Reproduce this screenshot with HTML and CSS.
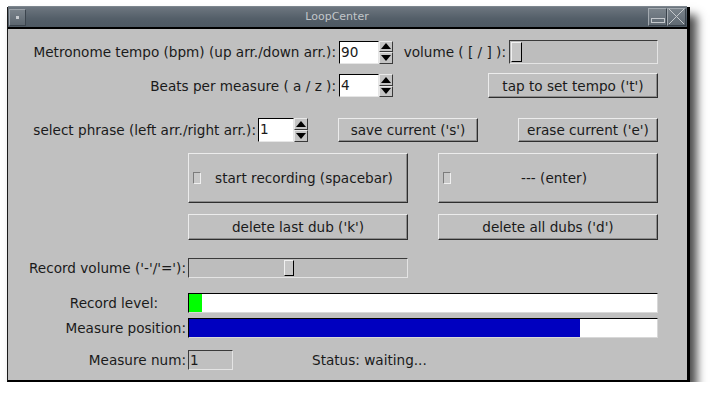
FILE: index.html
```html
<!DOCTYPE html>
<html>
<head>
<meta charset="utf-8">
<title>LoopCenter</title>
<link rel="stylesheet" href="styles.css">
</head>
<body>
<div class="window">
  <div class="titlebar">
    <div class="tb-menu"><span class="tb-dot"></span></div>
    <div class="tb-title">LoopCenter</div>
    <div class="tb-btn"><span class="min-bar"></span></div>
    <div class="tb-btn">
      <svg width="17" height="17" viewBox="0 0 17 17"><path d="M1 1 L16 16 M16 1 L1 16" stroke="#c4c8cc" stroke-width="1" fill="none"/></svg>
    </div>
  </div>
  <div class="content">
    <div class="row r1">
      <span class="lbl w-top">Metronome tempo (bpm) (up arr./down arr.):</span>
      <div class="spin">
        <div class="entry e-top">90</div>
        <div class="arrows">
          <span class="arr"><svg width="10" height="6" viewBox="0 0 10 6"><path d="M5 0 L10 6 L0 6 Z" fill="#000"/></svg></span>
          <span class="arr"><svg width="10" height="6" viewBox="0 0 10 6"><path d="M0 0 L10 0 L5 6 Z" fill="#000"/></svg></span>
        </div>
      </div>
      <div class="vol-group">
        <span class="lbl">volume ( [ / ] ):</span>
        <div class="trough vol-trough"><span class="handle h-vol"></span></div>
      </div>
    </div>

    <div class="row r2">
      <span class="lbl w-top">Beats per measure ( a / z ):</span>
      <div class="spin">
        <div class="entry e-top">4</div>
        <div class="arrows">
          <span class="arr"><svg width="10" height="6" viewBox="0 0 10 6"><path d="M5 0 L10 6 L0 6 Z" fill="#000"/></svg></span>
          <span class="arr"><svg width="10" height="6" viewBox="0 0 10 6"><path d="M0 0 L10 0 L5 6 Z" fill="#000"/></svg></span>
        </div>
      </div>
      <button class="btn b-tap">tap to set tempo ('t')</button>
    </div>

    <div class="row r3">
      <span class="lbl w-phrase">select phrase (left arr./right arr.):</span>
      <div class="spin">
        <div class="entry e-phrase">1</div>
        <div class="arrows">
          <span class="arr"><svg width="10" height="6" viewBox="0 0 10 6"><path d="M5 0 L10 6 L0 6 Z" fill="#000"/></svg></span>
          <span class="arr"><svg width="10" height="6" viewBox="0 0 10 6"><path d="M0 0 L10 0 L5 6 Z" fill="#000"/></svg></span>
        </div>
      </div>
      <button class="btn b-save">save current ('s')</button>
      <button class="btn b-erase">erase current ('e')</button>
    </div>

    <div class="grid2 r4">
      <button class="btn big"><span class="ind"></span><span class="big-txt">start recording (spacebar)</span></button>
      <button class="btn big"><span class="ind"></span><span class="big-txt">--- (enter)</span></button>
    </div>

    <div class="grid2 r5">
      <button class="btn">delete last dub ('k')</button>
      <button class="btn">delete all dubs ('d')</button>
    </div>

    <div class="row r6">
      <span class="lbl w-low">Record volume ('-'/'='):</span>
      <div class="trough rec-trough"><span class="handle h-rec"></span></div>
    </div>

    <div class="row r7">
      <span class="lbl w-low lvl">Record level:</span>
      <div class="bar"><span class="fill fill-green" style="width:13px"></span></div>
    </div>

    <div class="row r8">
      <span class="lbl w-low">Measure position:</span>
      <div class="bar"><span class="fill fill-blue" style="width:391px"></span></div>
    </div>

    <div class="row r9">
      <span class="lbl w-low">Measure num:</span>
      <div class="entry e-num">1</div>
      <span class="lbl status">Status: waiting...</span>
    </div>
  </div>
</div>
</body>
</html>
```

FILE: styles.css
```css
html, body {
  margin: 0;
  padding: 0;
  background: #ffffff;
}

body {
  padding: 7px 0 0 7px;
  font-family: "DejaVu Sans", sans-serif;
  font-size: 13.6px;
  color: #1a1a1a;
}

.window {
  width: 683px;
  height: 375px;
  box-sizing: border-box;
  border-left: 1px solid #1a1a1a;
  border-right: 3px solid #000;
  border-bottom: 2px solid #000;
  background: #c0c0c0;
  box-shadow: 7px 8px 9px rgba(0, 0, 0, 0.7);
  display: flex;
  flex-direction: column;
}

.titlebar {
  height: 20px;
  flex: none;
  display: flex;
  align-items: center;
  background: linear-gradient(#6d767f, #535e68 60%, #4e5963);
  border-top: 1px solid #7d868e;
  border-bottom: 2px solid #000;
  box-sizing: content-box;
  margin-top: -1px;
  padding: 0 1px 0 1px;
}

.tb-menu {
  width: 17px;
  height: 17px;
  box-sizing: border-box;
  border: 1px solid;
  border-color: #9aa1a8 #3c454e #3c454e #9aa1a8;
  background: linear-gradient(#7a838b, #5c666f);
  display: flex;
  align-items: center;
  justify-content: center;
}

.tb-dot {
  width: 3px;
  height: 3px;
  background: #c8ccd0;
}

.tb-title {
  flex: 1;
  text-align: center;
  color: #c2c6ca;
  font-size: 11px;
  line-height: 20px;
}

.tb-btn {
  width: 19px;
  height: 18px;
  box-sizing: border-box;
  border: 1px solid;
  border-color: #a3aab0 #3a434c #3a434c #a3aab0;
  background: linear-gradient(#7a838b, #5f6972);
  display: flex;
  align-items: flex-end;
  justify-content: center;
}

.tb-btn svg {
  display: block;
}

.min-bar {
  width: 12px;
  height: 3px;
  border: 1px solid #c4c8cc;
  margin-bottom: 2px;
}

.content {
  flex: 1;
  padding: 11px 29px 0 0;
  display: flex;
  flex-direction: column;
}

.row {
  display: flex;
  align-items: center;
}

.lbl {
  white-space: nowrap;
}

.w-top {
  width: 328px;
  text-align: right;
  margin-right: 3px;
}

.w-phrase {
  width: 248px;
  text-align: right;
  margin-right: 2px;
}

.w-low {
  width: 178px;
  text-align: right;
  margin-right: 2px;
}

.w-low.lvl {
  box-sizing: border-box;
  padding-right: 28px;
}

/* spinbox */
.spin {
  display: flex;
}

.entry {
  box-sizing: border-box;
  background: #ffffff;
  border: 1px solid;
  border-color: #000 #e6e6e6 #e6e6e6 #000;
  padding-left: 1px;
  line-height: 20px;
}

.e-top {
  width: 40px;
  height: 23px;
}

.e-phrase {
  width: 36px;
  height: 24px;
  line-height: 21px;
}

.arrows {
  width: 14px;
  display: flex;
  flex-direction: column;
}

.arr {
  flex: 1;
  box-sizing: border-box;
  border: 1px solid;
  border-color: #e8e8e8 #3a3a3a #3a3a3a #e8e8e8;
  background: #c4c4c4;
  display: flex;
  align-items: center;
  justify-content: center;
}

.arr svg {
  display: block;
}

/* row spacing */
.r1 {
  height: 24px;
}

.r2 {
  height: 25px;
  margin-top: 9px;
}

.r3 {
  height: 25px;
  margin-top: 19px;
}

.vol-group {
  margin-left: auto;
  display: flex;
  align-items: center;
}

.vol-group .lbl {
  margin-right: 3px;
}

/* scale trough */
.trough {
  box-sizing: border-box;
  border: 1px solid;
  border-color: #3a3a3a #e4e4e4 #e4e4e4 #3a3a3a;
  background: #bdbdbd;
  display: flex;
  align-items: center;
  padding: 1px;
}

.vol-trough {
  width: 149px;
  height: 24px;
}

.rec-trough {
  width: 220px;
  height: 20px;
}

.handle {
  box-sizing: border-box;
  border: 1px solid;
  border-color: #f0f0f0 #000 #000 #f0f0f0;
  background: #c6c6c6;
  height: 100%;
}

.h-vol {
  width: 11px;
}

.h-rec {
  width: 10px;
  margin-left: 94px;
}

/* buttons */
.btn {
  font: inherit;
  color: #1a1a1a;
  box-sizing: border-box;
  border: 1px solid;
  border-color: #ececec #2e2e2e #2e2e2e #ececec;
  box-shadow: inset -1px -1px 0 #8c8c8c;
  background: #c0c0c0;
  padding: 0;
  margin: 0;
  white-space: nowrap;
}

.b-tap {
  width: 170px;
  height: 25px;
  margin-left: auto;
}

.b-save {
  width: 140px;
  height: 24px;
  margin-left: 30px;
}

.b-erase {
  width: 140px;
  height: 24px;
  margin-left: auto;
}

.grid2 {
  display: grid;
  grid-template-columns: 220px 220px;
  column-gap: 30px;
  margin-left: 180px;
}

.r4 {
  margin-top: 11px;
  height: 50px;
}

.r5 {
  margin-top: 11px;
  height: 26px;
}

.big {
  display: flex;
  align-items: center;
  padding-left: 4px;
}

.ind {
  width: 8px;
  height: 12px;
  box-sizing: border-box;
  border: 1px solid;
  border-color: #7c7c7c #f0f0f0 #f0f0f0 #7c7c7c;
  background: #c8c8c8;
  flex: none;
}

.big-txt {
  flex: 1;
  text-align: center;
}

.r6 {
  margin-top: 18px;
  height: 20px;
}

/* progress bars */
.bar {
  width: 470px;
  height: 20px;
  box-sizing: border-box;
  border: 1px solid;
  border-color: #000 #d8d8d8 #d8d8d8 #000;
  background: #ffffff;
  display: flex;
}

.fill {
  height: 100%;
  display: block;
}

.fill-green {
  background: #00ff00;
}

.fill-blue {
  background: #0000c0;
}

.r7 {
  margin-top: 15px;
  height: 20px;
}

.r8 {
  margin-top: 5px;
  height: 20px;
}

.r9 {
  margin-top: 12px;
  height: 20px;
}

.e-num {
  width: 45px;
  height: 20px;
  background: #c0c0c0;
  border-color: #3a3a3a #e4e4e4 #e4e4e4 #3a3a3a;
  line-height: 18px;
}

.status {
  margin-left: 79px;
}
```
